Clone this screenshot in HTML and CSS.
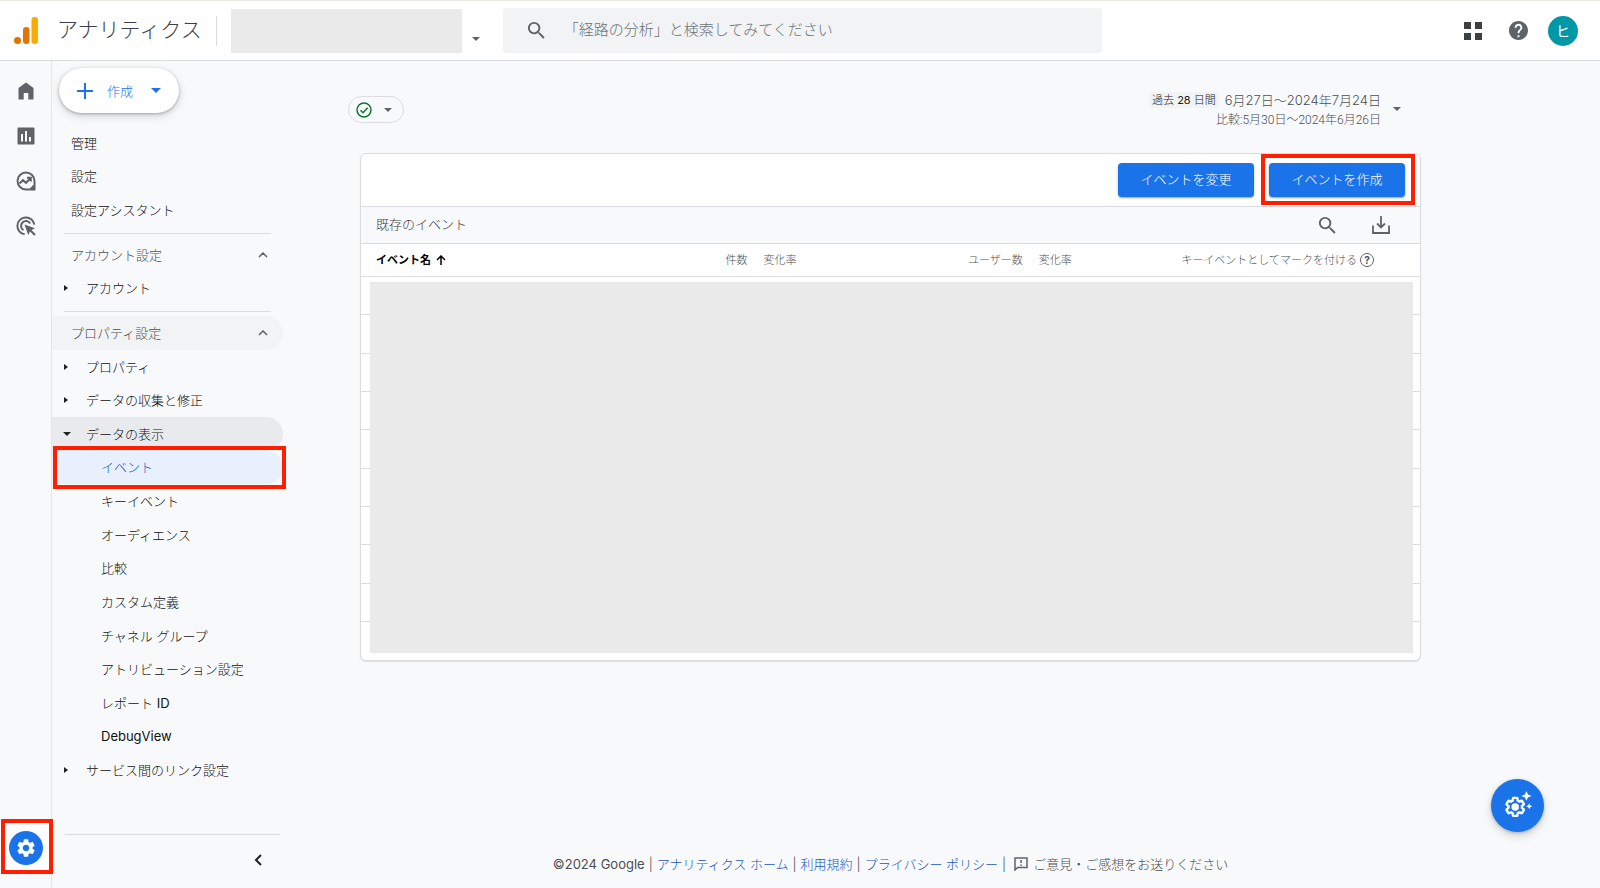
FILE: index.html
```html
<!DOCTYPE html>
<html lang="ja">
<head>
<meta charset="utf-8">
<meta name="viewport" content="width=device-width, initial-scale=1">
<title>アナリティクス</title>
<link rel="stylesheet" href="styles.css">
</head>
<body class="app">
<header class="topbar">
  <svg class="logo" viewBox="0 0 24 27" aria-hidden="true">
    <circle cx="3.5" cy="23.5" r="3.5" fill="#e37400"/>
    <rect x="9" y="10" width="6.5" height="17" rx="3.2" fill="#e37400"/>
    <rect x="17.5" y="0" width="6.5" height="27" rx="3.2" fill="#f9ab00"/>
  </svg>
  <span class="brand">アナリティクス</span>
  <span class="mask account-mask"></span>
  <button class="icon-btn account-btn" type="button" aria-label="アカウントを選択"><span class="caret"></span></button>
  <label class="search">
    <svg class="ico ico-search" viewBox="0 0 24 24" aria-hidden="true"><path d="M15.5 14h-.79l-.28-.27A6.47 6.47 0 0 0 16 9.5 6.5 6.5 0 1 0 9.500 16c1.610 0 3.090-.59 4.230-1.570l.27.28v.79l5 4.990L20.490 19l-4.990-5zm-6 0C7.010 14 5 11.990 5 9.500S7.010 5 9.500 5 14 7.010 14 9.500 11.990 14 9.500 14z"/></svg>
    <input class="search-input" type="text" placeholder="「経路の分析」と検索してみてください" aria-label="検索">
  </label>
  <div class="top-actions">
    <button class="icon-btn top-btn" type="button" aria-label="アプリ">
      <svg class="ico-apps" viewBox="0 0 18 18"><path d="M0 0h7v7H0zM11 0h7v7h-7zM0 11h7v7H0zM11 11h7v7h-7z"/></svg>
    </button>
    <button class="icon-btn top-btn" type="button" aria-label="ヘルプ">
      <svg class="ico-help" viewBox="2 2 20 20"><path d="M12 2C6.480 2 2 6.480 2 12s4.480 10 10 10 10-4.480 10-10S17.520 2 12 2zm1 17h-2v-2h2v2zm2.070-7.750-.9.920C13.450 12.900 13 13.500 13 15h-2v-.5c0-1.100.45-2.100 1.170-2.830l1.240-1.260c.37-.36.59-.86.59-1.410 0-1.100-.9-2-2-2s-2 .9-2 2H8c0-2.210 1.790-4 4-4s4 1.790 4 4c0 .88-.36 1.680-.93 2.250z"/></svg>
    </button>
    <button class="avatar" type="button">ヒ</button>
  </div>
</header>
<div class="body">
  <nav class="rail" aria-label="メイン">
    <a class="rail-link" href="#" aria-label="ホーム"><svg class="ico" viewBox="0 0 20 20"><path d="M2.500 18.500V7L10 1.500 17.500 7v11.500h-5.200v-6.500H7.700v6.500z"/></svg></a>
    <a class="rail-link" href="#" aria-label="レポート"><svg class="ico" viewBox="0 0 20 20"><path fill-rule="evenodd" d="M2.500 1.500h15a1 1 0 0 1 1 1v15a1 1 0 0 1-1 1h-15a1 1 0 0 1-1-1v-15a1 1 0 0 1 1-1zM5 8v7.500h2V8zm4-3v10.500h2V5zm4 6v4.500h2V11z"/></svg></a>
    <a class="rail-link" href="#" aria-label="探索"><svg class="ico line" viewBox="0 0 20 20"><path d="M18.500 10v8.500H10A8.500 8.500 0 1 1 18.500 10zM17.800 14.500a9 9 0 0 1-3.300 3.300"/><path d="M3.500 12.500l3.500-3.300 3 2.600 4.500-4.600M11 6.700h3.800v3.800"/><path class="solid" d="M18.500 14v4.500H14z"/></svg></a>
    <a class="rail-link" href="#" aria-label="広告"><svg class="ico line" viewBox="0 0 20 20"><path d="M8.600 18.300A8.500 8.500 0 1 1 18.300 8.600"/><path d="M7.500 14.200a4.900 4.900 0 1 1 6.700-6.700"/><path class="solid" d="M8.500 8.500l10.500 3.700-3.500 1.800 4.200 4.300-1.400 1.400-4.300-4.200-1.800 3.500z"/></svg></a>
    <div class="rail-admin">
      <a class="admin-btn" href="#" aria-label="管理"><svg class="ico" viewBox="0 0 24 24"><path d="M19.140 12.940c.04-.3.06-.61.06-.94 0-.32-.02-.64-.07-.94l2.030-1.580c.18-.14.23-.41.12-.61l-1.920-3.320c-.12-.22-.37-.29-.59-.22l-2.390.96c-.5-.38-1.030-.7-1.620-.94l-.36-2.540c-.04-.24-.24-.41-.48-.41h-3.840c-.24 0-.43.17-.47.41l-.36 2.540c-.59.24-1.130.57-1.620.94l-2.390-.96c-.22-.08-.47 0-.59.22L2.740 8.870c-.12.21-.08.47.12.61l2.030 1.580c-.05.3-.09.63-.09.94s.02.64.07.94l-2.030 1.580c-.18.14-.23.41-.12.61l1.920 3.320c.12.22.37.29.59.22l2.390-.96c.5.38 1.030.7 1.620.94l.36 2.540c.05.24.24.41.48.41h3.840c.24 0 .44-.17.47-.41l.36-2.540c.59-.24 1.130-.56 1.620-.94l2.390.96c.22.08.47 0 .59-.22l1.920-3.320c.12-.22.07-.47-.12-.61l-2.010-1.580zM12 15.600c-1.980 0-3.600-1.620-3.600-3.600s1.620-3.600 3.600-3.600 3.600 1.620 3.600 3.600-1.620 3.600-3.600 3.600z"/></svg></a>
    </div>
  </nav>
  <aside class="sidebar">
    <button class="create" type="button">
      <svg class="plus" viewBox="0 0 16 16" aria-hidden="true"><path d="M8 0v16M0 8h16"/></svg>
      作成
      <span class="caret"></span>
    </button>
    <ul class="menu">
      <li class="row"><a class="item" href="#">管理</a></li>
      <li class="row"><a class="item" href="#">設定</a></li>
      <li class="row"><a class="item" href="#">設定アシスタント</a></li>
      <li class="rule" role="separator"></li>
      <li class="row"><button class="item section" type="button">アカウント設定<svg class="chev" viewBox="0 0 10 6"><path d="M1 5l4-4 4 4"/></svg></button></li>
      <li class="row"><button class="item group" type="button"><span class="tri"></span>アカウント</button></li>
      <li class="rule" role="separator"></li>
      <li class="row"><button class="item section hovered" type="button">プロパティ設定<svg class="chev" viewBox="0 0 10 6"><path d="M1 5l4-4 4 4"/></svg></button></li>
      <li class="row"><button class="item group" type="button"><span class="tri"></span>プロパティ</button></li>
      <li class="row"><button class="item group" type="button"><span class="tri"></span>データの収集と修正</button></li>
      <li class="row"><button class="item group open" type="button" aria-expanded="true"><span class="tri down"></span>データの表示</button></li>
      <li class="row marked"><a class="item leaf current" href="#" aria-current="page">イベント</a></li>
      <li class="row"><a class="item leaf" href="#">キーイベント</a></li>
      <li class="row"><a class="item leaf" href="#">オーディエンス</a></li>
      <li class="row"><a class="item leaf" href="#">比較</a></li>
      <li class="row"><a class="item leaf" href="#">カスタム定義</a></li>
      <li class="row"><a class="item leaf" href="#">チャネル グループ</a></li>
      <li class="row"><a class="item leaf" href="#">アトリビューション設定</a></li>
      <li class="row"><a class="item leaf" href="#">レポート <span class="latin">ID</span></a></li>
      <li class="row"><a class="item leaf" href="#"><span class="latin">DebugView</span></a></li>
      <li class="row"><button class="item group" type="button"><span class="tri"></span>サービス間のリンク設定</button></li>
    </ul>
    <div class="sidebar-foot">
      <button class="icon-btn" type="button" aria-label="メニューを閉じる"><svg class="collapse" viewBox="0 0 8 12"><path d="M7 1L2 6l5 5"/></svg></button>
    </div>
  </aside>
  <main class="main">
    <div class="controls">
      <button class="status" type="button" aria-label="データの状態">
        <svg class="ok" viewBox="0 0 16 16"><circle cx="8" cy="8" r="7"/><path d="M4.500 8.300l2.500 2.400 4.700-5"/></svg>
        <span class="caret"></span>
      </button>
      <button class="dates" type="button">
        <span class="dates-text">
          <span class="range"><span class="preset">過去 <b>28</b> 日間</span>6月27日〜2024年7月24日</span>
          <span class="compare">比較:5月30日〜2024年6月26日</span>
        </span>
        <span class="caret"></span>
      </button>
    </div>
    <section class="card">
      <div class="card-actions">
        <button class="primary" type="button">イベントを変更</button>
        <span class="marked marked-btn"><button class="primary" type="button">イベントを作成</button></span>
      </div>
      <div class="card-title">
        <h1 class="title">既存のイベント</h1>
        <button class="icon-btn" type="button" aria-label="検索"><svg class="ico ico-search" viewBox="0 0 24 24"><path d="M15.500 14h-.79l-.28-.27A6.470 6.470 0 0 0 16 9.500 6.500 6.500 0 1 0 9.500 16c1.610 0 3.090-.59 4.230-1.570l.27.28v.79l5 4.990L20.490 19l-4.990-5zm-6 0C7.010 14 5 11.990 5 9.500S7.010 5 9.500 5 14 7.010 14 9.500 11.990 14 9.500 14z"/></svg></button>
        <button class="icon-btn" type="button" aria-label="ダウンロード"><svg class="download" viewBox="0 0 18 18"><path d="M9 0v11M5 7.500l4 4 4-4M1 9.500V17h16V9.500"/></svg></button>
      </div>
      <div class="table-wrap">
        <table class="events">
          <colgroup><col class="c-name"><col class="c-num"><col class="c-chg"><col class="c-chg"><col class="c-chg"><col></colgroup>
          <thead>
            <tr>
              <th class="name" scope="col">イベント名<svg class="sort" viewBox="0 0 10 10" aria-hidden="true"><path d="M5 10V1M1 5l4-4 4 4"/></svg></th>
              <th class="num" scope="col">件数</th>
              <th class="chg" scope="col">変化率</th>
              <th class="num" scope="col">ユーザー数</th>
              <th class="chg" scope="col">変化率</th>
              <th class="key" scope="col">キーイベントとしてマークを付ける<span class="hint">?</span></th>
            </tr>
          </thead>
          <tbody>
            <tr><td colspan="6"></td></tr><tr><td colspan="6"></td></tr>
            <tr><td colspan="6"></td></tr><tr><td colspan="6"></td></tr>
            <tr><td colspan="6"></td></tr><tr><td colspan="6"></td></tr>
            <tr><td colspan="6"></td></tr><tr><td colspan="6"></td></tr>
            <tr><td colspan="6"></td></tr><tr><td colspan="6"></td></tr>
          </tbody>
        </table>
        <div class="mask table-mask"></div>
      </div>
    </section>
    <footer class="footer">
      <span class="latin">©2024 Google</span>
      <span>|</span>
      <a class="link" href="#">アナリティクス ホーム</a>
      <span>|</span>
      <a class="link" href="#">利用規約</a>
      <span>|</span>
      <a class="link" href="#">プライバシー ポリシー</a>
      <span>|</span>
      <button class="feedback" type="button"><svg class="bubble" viewBox="0 0 14 14" aria-hidden="true"><path d="M1 13V1h12v9.500H3.500zM7 3v3M7 7.500V9"/></svg>ご意見・ご感想をお送りください</button>
    </footer>
  </main>
</div>
<button class="fab" type="button" aria-label="設定アシスタント">
  <svg class="fab-ico" viewBox="0 0 32 32"><g transform="translate(1 5)"><path class="gear" d="M19.140 12.940c.04-.3.06-.61.06-.94 0-.32-.02-.64-.07-.94l2.030-1.580c.18-.14.23-.41.12-.61l-1.920-3.320c-.12-.22-.37-.29-.59-.22l-2.390.96c-.5-.38-1.030-.7-1.620-.94l-.36-2.540c-.04-.24-.24-.41-.48-.41h-3.840c-.24 0-.43.17-.47.41l-.36 2.540c-.59.24-1.130.57-1.620.94l-2.390-.96c-.22-.08-.47 0-.59.22L2.740 8.870c-.12.21-.08.47.12.61l2.030 1.580c-.05.3-.09.63-.09.94s.02.64.07.94l-2.030 1.580c-.18.14-.23.41-.12.61l1.920 3.320c.12.22.37.29.59.22l2.390-.96c.5.38 1.030.7 1.620.94l.36 2.540c.05.24.24.41.48.41h3.840c.24 0 .44-.17.47-.41l.36-2.540c.59-.24 1.130-.56 1.620-.94l2.390.96c.22.08.47 0 .59-.22l1.920-3.320c.12-.22.07-.47-.12-.61z"/><circle cx="12" cy="12" r="4" fill="#fff"/></g><path class="spark" d="M25 0l1.600 3.600L30.500 5.200l-3.900 1.600L25 10.500l-1.600-3.700-3.900-1.600 3.900-1.600zM28 13l1 2.200 2.200 1-2.200 1-1 2.300-1-2.300-2.200-1 2.200-1z"/></svg>
</button>
</body>
</html>
```

FILE: styles.css
```css
* { box-sizing: border-box; }

.app {
  margin: 0;
  min-height: 100vh;
  display: flex;
  flex-direction: column;
  background: #f8f9fb;
  color: #111;
  font: 13px/20px Inter, "Noto Sans CJK JP", sans-serif;
  font-weight: 300;
}

button, input {
  font: inherit;
  color: inherit;
  border: 0;
  padding: 0;
  background: none;
}
button { cursor: pointer; }
a { color: inherit; text-decoration: none; }
svg { display: block; flex: none; }

.latin { font-weight: 400; }
.ico { width: 20px; height: 20px; fill: #5f6368; }
.line { fill: none; stroke: #5f6368; stroke-width: 2; }
.line .solid { fill: #5f6368; stroke: none; }
.mask { display: block; background: #eaeaea; }
.icon-btn { display: flex; align-items: center; justify-content: center; }
.caret {
  flex: none;
  border: 4px solid transparent;
  border-top-color: #5f6368;
  border-bottom-width: 0;
}

/* Top bar */
.topbar {
  display: flex;
  align-items: center;
  height: 61px;
  padding: 0 22px 0 14px;
  border-top: 1px solid #e8e8e0;
  border-bottom: 1px solid #dadce0;
  background: #fff;
}
.logo { width: 24px; height: 27px; }
.brand {
  margin-left: 19px;
  padding: 0 14px 2px 0;
  border-right: 1px solid #dadce0;
  color: #3c4043;
  font-size: 21px;
  line-height: 28px;
}
.account-mask { width: 231px; height: 44px; margin-left: 14px; }
.account-btn { width: 28px; height: 24px; margin-top: 16px; }
.search {
  display: flex;
  align-items: center;
  flex: 0 1 599px;
  height: 45px;
  margin-left: 13px;
  padding-left: 22px;
  border-radius: 4px;
  background: #f1f3f4;
}
.ico-search { width: 23px; height: 23px; }
.search-input { flex: 1; margin-left: 16px; padding-bottom: 2px; font-size: 15px; outline: 0; }
.search-input::placeholder { color: #6d7277; }
.top-actions { display: flex; align-items: center; gap: 15px; margin-left: auto; }
.top-btn { width: 30px; height: 30px; }
.ico-apps { width: 18px; height: 18px; fill: #3c4043; }
.ico-help { width: 19px; height: 19px; fill: #5f6368; }
.avatar {
  width: 30px;
  height: 30px;
  border-radius: 50%;
  background: #0097a7;
  color: #fff;
  font-size: 14px;
  font-weight: 400;
}

.body { display: flex; flex: 1; }

/* Icon rail */
.rail {
  display: flex;
  flex-direction: column;
  align-items: center;
  width: 52px;
  padding-top: 7px;
  border-right: 1px solid #e3e5e8;
}
.rail-link { display: flex; align-items: center; height: 45px; }
.rail-admin {
  align-self: flex-start;
  margin: auto 0 14px 1px;
  padding: 8px 6px 5px 4px;
  border: 4px solid #ff1e00;
  background: #fff;
}
.admin-btn {
  display: flex;
  align-items: center;
  justify-content: center;
  width: 34px;
  height: 34px;
  border-radius: 50%;
  background: #1a73e8;
}
.admin-btn .ico { width: 22px; height: 22px; fill: #fff; }

/* Settings menu */
.sidebar {
  display: flex;
  flex-direction: column;
  width: 233px;
  padding-top: 7px;
}
.create {
  display: flex;
  align-items: center;
  align-self: flex-start;
  height: 45px;
  margin-left: 7px;
  padding: 0 18px;
  border-radius: 23px;
  background: #fff;
  box-shadow: 0 1px 3px rgba(60, 64, 67, .35), 0 3px 8px rgba(60, 64, 67, .2);
  color: #1a73e8;
  gap: 14px;
}
.create .caret { border-top-color: #1a73e8; margin-left: 4px; border-width: 5px 5px 0; }
.plus { width: 16px; height: 16px; stroke: #1a73e8; stroke-width: 2; }
.menu {
  display: flex;
  flex-direction: column;
  flex: 1;
  margin: 13px 0 47px;
  padding: 0;
  list-style: none;
}
.row { display: flex; flex: 1 0 32px; position: relative; }
.rule { height: 1px; margin: 6px 14px 4px 12px; background: #dadce0; }
.item {
  display: flex;
  align-items: center;
  flex: 1;
  margin-right: 2px;
  padding-left: 19px;
  border-radius: 0 17px 17px 0;
  text-align: left;
}
.section { justify-content: space-between; padding-right: 15px; color: #4b4f54; }
.hovered { background: #f1f3f4; }
.group { padding-left: 11px; }
.open { background: #e8eaed; }
.leaf { padding-left: 49px; white-space: pre; }
.current { background: #e8f0fe; color: #1558c0; }
.chev { width: 10px; height: 6px; fill: none; stroke: #5f6368; stroke-width: 1.5; }
.tri {
  margin: 0 18px 0 1px;
  border: 3px solid transparent;
  border-left: 4px solid #202124;
  border-right-width: 0;
}
.tri.down {
  margin: 0 15px 0 0;
  border: 4px solid transparent;
  border-top-color: #202124;
  border-bottom-width: 0;
}
.marked::after {
  content: "";
  position: absolute;
  inset: -5px -1px -5px 1px;
  border: 4px solid #ff1e00;
  pointer-events: none;
  z-index: 1;
}
.sidebar-foot {
  display: flex;
  justify-content: flex-end;
  align-items: center;
  height: 54px;
  margin: 0 5px 0 13px;
  padding: 0 18px 4px 0;
  border-top: 1px solid #dadce0;
}
.collapse { width: 8px; height: 12px; fill: none; stroke: #202124; stroke-width: 2; }

/* Main column */
.main {
  display: flex;
  flex-direction: column;
  flex: 1;
  min-width: 0;
  padding: 28px 179px 14px 75px;
}
.controls { display: flex; justify-content: space-between; }
.status {
  display: flex;
  align-items: center;
  gap: 12px;
  height: 27px;
  margin: 7px 0 0 -12px;
  padding: 0 11px 0 7px;
  border: 1px solid #dadce0;
  border-radius: 14px;
}
.ok { width: 16px; height: 16px; fill: none; stroke: #137333; stroke-width: 1.5; }
.dates { display: flex; align-items: center; gap: 12px; margin-right: 20px; color: #4b4f54; }
.dates-text { display: flex; flex-direction: column; align-items: flex-end; }
.range { display: flex; align-items: center; gap: 6px; line-height: 22px; }
.preset {
  padding: 0 3px;
  background: #f1f3f4;
  color: #202124;
  font-size: 11px;
  line-height: 16px;
}
.compare { font-family: Roboto, "Noto Sans CJK JP", sans-serif; font-size: 12px; line-height: 18px; }

.card {
  margin-top: 24px;
  border: 1px solid #dadce0;
  border-radius: 6px;
  background: #fff;
  box-shadow: 0 1px 1px rgba(60, 64, 67, .15);
}
.card-actions {
  display: flex;
  justify-content: flex-end;
  align-items: center;
  gap: 15px;
  height: 52px;
  padding-right: 15px;
}
.primary {
  width: 136px;
  height: 34px;
  padding-bottom: 3px;
  border-radius: 4px;
  background: #1a73e8;
  box-shadow: 0 1px 2px rgba(60, 64, 67, .5);
  color: #fff;
}
.marked-btn { position: relative; }
.marked-btn::after { inset: -9px -10px -8px -8px; }
.card-title {
  display: flex;
  align-items: center;
  gap: 33px;
  height: 37px;
  padding: 0 30px 0 15px;
  border-top: 1px solid #dadce0;
  background: #f8f9fb;
}
.title { flex: 1; margin: 0; padding-bottom: 3px; color: #3c4043; font-size: 13px; font-weight: 300; }
.download { width: 18px; height: 18px; fill: none; stroke: #5f6368; stroke-width: 1.8; }
.table-wrap { position: relative; }
.events {
  width: 100%;
  height: 417px;
  table-layout: fixed;
  border-collapse: collapse;
}
.c-name { width: 24%; }
.c-num { width: 12.5%; }
.c-chg { width: 13%; }
.events th {
  height: 33px;
  padding: 0;
  border-top: 1px solid #dadce0;
  color: #4b4f54;
  font-size: 11px;
  font-weight: 300;
  text-align: left;
}
.events td { height: 38px; padding: 0; border-top: 1px solid #dadce0; }
.events .name { padding-left: 15px; color: #000; font-weight: 700; }
.events .num { text-align: right; }
.events .chg { padding-left: 16px; }
.events .key { padding-right: 46px; text-align: right; white-space: nowrap; }
.sort { display: inline-block; width: 10px; height: 10px; margin-left: 5px; vertical-align: -1px; fill: none; stroke: #000; stroke-width: 1.5; }
.hint {
  display: inline-block;
  width: 14px;
  height: 14px;
  margin-left: 3px;
  border: 1px solid #5f6368;
  border-radius: 50%;
  font: 700 10px/12px Inter, sans-serif;
  text-align: center;
}
.table-mask { position: absolute; inset: 39px 7px 7px 9px; }

.footer {
  display: flex;
  align-items: center;
  justify-content: center;
  gap: 4px;
  margin-top: auto;
  color: #4b4f54;
}
.link { color: #1558c0; }
.feedback { display: flex; align-items: center; gap: 5px; margin-left: 4px; }
.bubble { width: 14px; height: 14px; fill: none; stroke: #5f6368; stroke-width: 1.5; }

.fab {
  position: fixed;
  right: 56px;
  bottom: 56px;
  display: flex;
  align-items: center;
  justify-content: center;
  width: 53px;
  height: 53px;
  border-radius: 50%;
  background: #1a73e8;
  box-shadow: 0 1px 3px rgba(60, 64, 67, .3), 0 4px 8px rgba(60, 64, 67, .2);
}
.fab-ico { width: 30px; height: 30px; }
.gear { fill: none; stroke: #fff; stroke-width: 2.5; }
.spark { fill: #fff; }
```
